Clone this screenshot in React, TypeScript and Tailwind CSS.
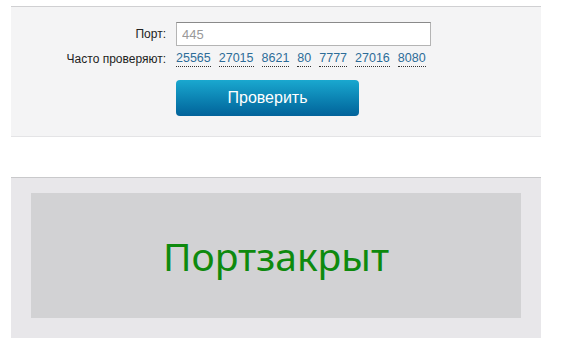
import React from "react";

const popular = ["25565", "27015", "8621", "80", "7777", "27016", "8080"];

export default function App() {
  return (
    <div className="min-h-[352px] w-[572px] bg-white pt-[6px] font-['Liberation_Sans',Arial,sans-serif]">
      {/* Check form */}
      <div className="ml-[11px] w-[530px] h-[131px] bg-[#f4f4f5] border-t border-b border-t-[#d0d0d2] border-b-[#e4e4e6] pt-[15px]">
        <div className="flex items-center h-[24px]">
          <span className="w-[155px] text-right text-[12px] text-[#222]">Порт:</span>
          <input
            defaultValue="445"
            className="ml-[10px] w-[255px] h-[24px] border border-[#b4b4b4] border-t-[#8a8a8a] bg-white px-[5px] text-[13px] text-[#999] outline-none"
          />
        </div>
        <div className="flex items-center h-[22px] mt-[2px]">
          <span className="w-[155px] text-right text-[12px] text-[#222]">Часто проверяют:</span>
          <div className="ml-[10px] flex gap-[8px] text-[12.5px] text-[#2d6c98]">
            {popular.map((p) => (
              <a key={p} className="border-b border-dotted border-[#333] leading-[15px] cursor-pointer">
                {p}
              </a>
            ))}
          </div>
        </div>
        <button className="ml-[165px] mt-[10px] w-[183px] h-[36px] rounded-[4px] bg-gradient-to-b from-[#1aa8cf] to-[#03639a] text-white text-[16px]">
          Проверить
        </button>
      </div>

      {/* Result */}
      <div className="ml-[11px] mt-[40px] w-[530px] h-[161px] bg-[#e8e7ea] border-t border-[#c9c9cb] px-[20px] pt-[15px]">
        <div className="h-[125px] bg-[#d2d2d4] flex items-center justify-center">
          <span className="text-[39px] text-[#0e8a0e] font-['Noto_Sans',sans-serif] leading-none">Портзакрыт</span>
        </div>
      </div>
    </div>
  );
}
